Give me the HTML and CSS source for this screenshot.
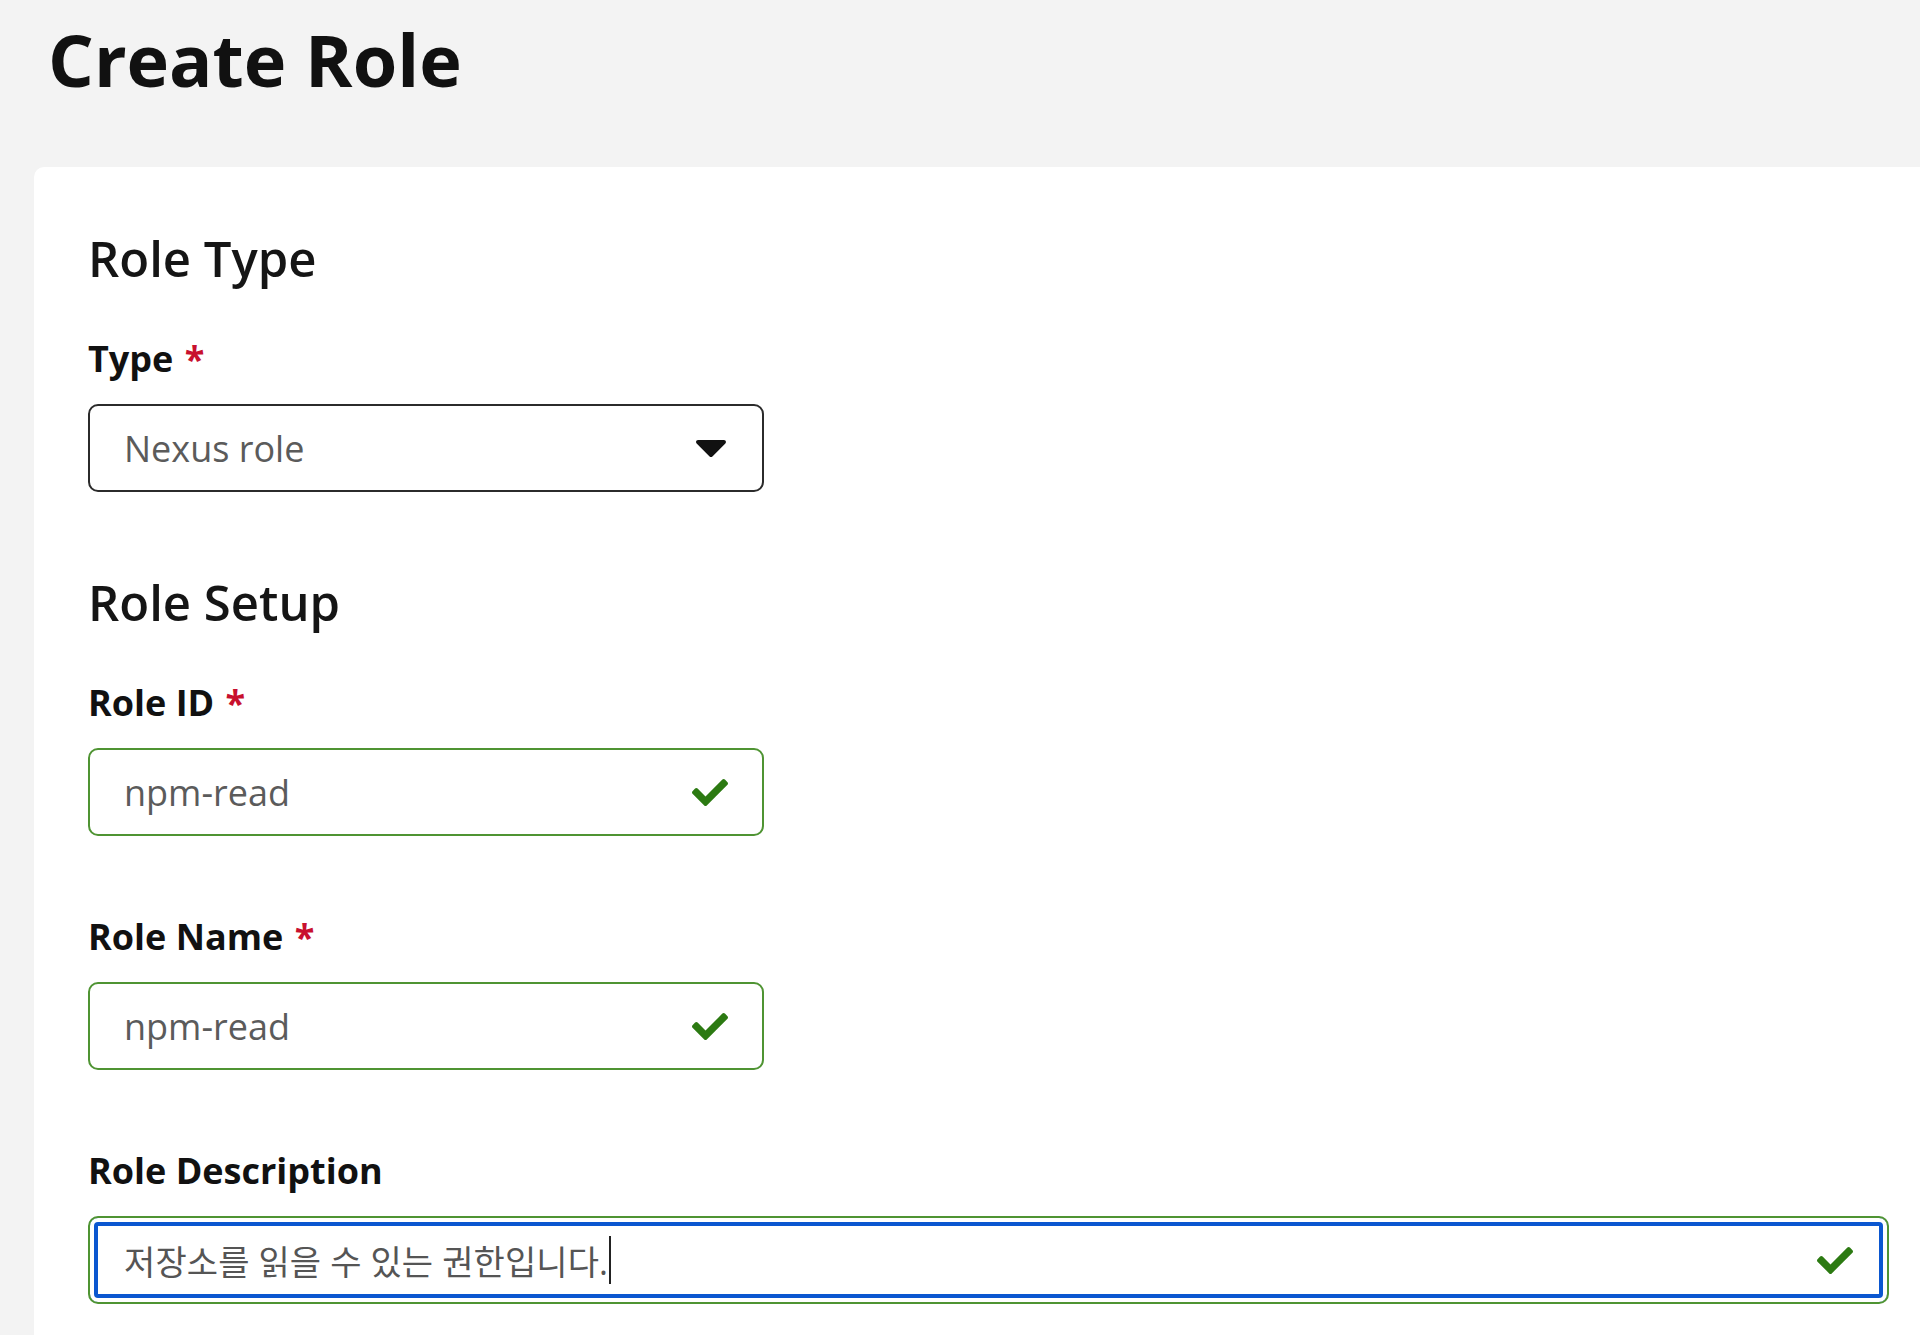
FILE: index.html
```
<!DOCTYPE html>
<html>
  <head>
    <meta charset="utf-8">
    <meta name="viewport" content="width=device-width, initial-scale=1.0">
    <title>Create Role</title>
    <link rel="stylesheet" href="styles.css">
  </head>
  <body>
  <main class="page">
    <h1 class="page__title">Create Role</h1>
    <section class="card">
      <h2 class="card__heading">Role Type</h2>
      <div class="form-field">
        <label class="form-field__label">Type <span class="required">*</span></label>
        <div class="field field--select">
          <span class="field__value">Nexus role</span>
          <svg class="field__caret" viewBox="1 192 318 169" width="32" height="17">
            <path d="M31.3 192h257.3c17.8 0 26.7 21.5 14.1 34.1L174.1 354.8c-7.8 7.8-20.5 7.8-28.3 0L17.2 226.1C4.6 213.5 13.5 192 31.3 192z"/>
          </svg>
        </div>
      </div>

      <h2 class="card__heading">Role Setup</h2>
      <div class="form-field">
        <label class="form-field__label">Role ID <span class="required">*</span></label>
        <div class="field field--valid">
          <span class="field__value">npm-read</span>
          <svg class="field__check" viewBox="0 64 512 384" width="36" height="27">
            <path d="M173.898 439.404l-166.4-166.4c-9.997-9.997-9.997-26.206 0-36.204l36.203-36.204c9.997-9.998 26.207-9.998 36.204 0L192 312.69 432.095 72.596c9.997-9.997 26.207-9.997 36.204 0l36.203 36.204c9.997 9.997 9.997 26.206 0 36.204l-294.4 294.401c-9.998 9.997-26.207 9.997-36.204-.001z"/>
          </svg>
        </div>
      </div>
      <div class="form-field">
        <label class="form-field__label">Role Name <span class="required">*</span></label>
        <div class="field field--valid">
          <span class="field__value">npm-read</span>
          <svg class="field__check" viewBox="0 64 512 384" width="36" height="27">
            <path d="M173.898 439.404l-166.4-166.4c-9.997-9.997-9.997-26.206 0-36.204l36.203-36.204c9.997-9.998 26.207-9.998 36.204 0L192 312.69 432.095 72.596c9.997-9.997 26.207-9.997 36.204 0l36.203 36.204c9.997 9.997 9.997 26.206 0 36.204l-294.4 294.401c-9.998 9.997-26.207 9.997-36.204-.001z"/>
          </svg>
        </div>
      </div>
      <div class="form-field">
        <label class="form-field__label">Role Description</label>
        <div class="field field--valid field--wide field--focus">
          <span class="field__value field__value--ko">저장소를 읽을 수 있는 권한입니다.</span><span class="field__cursor"></span>
          <svg class="field__check" viewBox="0 64 512 384" width="36" height="27">
            <path d="M173.898 439.404l-166.4-166.4c-9.997-9.997-9.997-26.206 0-36.204l36.203-36.204c9.997-9.998 26.207-9.998 36.204 0L192 312.69 432.095 72.596c9.997-9.997 26.207-9.997 36.204 0l36.203 36.204c9.997 9.997 9.997 26.206 0 36.204l-294.4 294.401c-9.998 9.997-26.207 9.997-36.204-.001z"/>
          </svg>
        </div>
      </div>
    </section>
  </main>
  </body>
</html>
```

FILE: styles.css
```
* {
  box-sizing: border-box;
  font-family: "Open Sans", "Noto Sans CJK KR", sans-serif;
  margin: 0;
}

html, body {
  margin: 0;
  height: 100%;
  overflow: hidden;
  background: #f3f3f3;
}

.page {
  padding: 10px 0 0 34px;
}

.page__title {
  margin: 0 0 59px 14px;
  font-size: 72px;
  line-height: 98px;
  font-weight: 700;
  color: #111;
}

.card {
  width: 1909px;
  min-height: 1200px;
  padding: 58px 54px;
  background: #fff;
  border-radius: 10px 10px 0 0;
}

.card__heading {
  margin-bottom: 43px;
  font-size: 49px;
  line-height: 67px;
  font-weight: 600;
  color: #151515;
}

.form-field + .card__heading {
  margin-top: 5px;
}

.form-field {
  margin-bottom: 77px;
}

.form-field__label {
  display: block;
  margin-bottom: 21px;
  font-size: 36px;
  line-height: 48px;
  font-weight: 700;
  color: #111;
}

.required {
  color: #c8102e;
  margin-left: 2px;
}

.field {
  display: flex;
  align-items: center;
  width: 676px;
  height: 88px;
  padding: 0 34px 0 34px;
  border: 2px solid #2b2b2b;
  border-radius: 10px;
  background: #fff;
}

.field__value {
  font-size: 36px;
  color: #5b5b5b;
  white-space: nowrap;
}

.field__value--ko {
  font-size: 34px;
  letter-spacing: 0.1px;
  color: #555;
}

.field__cursor {
  display: inline-block;
  width: 2px;
  height: 48px;
  margin-left: 1px;
  background: #222;
}

.field__caret {
  margin-left: auto;
  margin-right: 1px;
  fill: #111;
}

.field__check {
  margin-left: auto;
  fill: #2c7a12;
}

.field--valid {
  border-color: #4f9433;
}

.field--wide {
  width: 100%;
}

.field--focus {
  box-shadow: inset 0 0 0 4px #fff, inset 0 0 0 8px #0b57d0;
  padding-left: 34px;
}
```
